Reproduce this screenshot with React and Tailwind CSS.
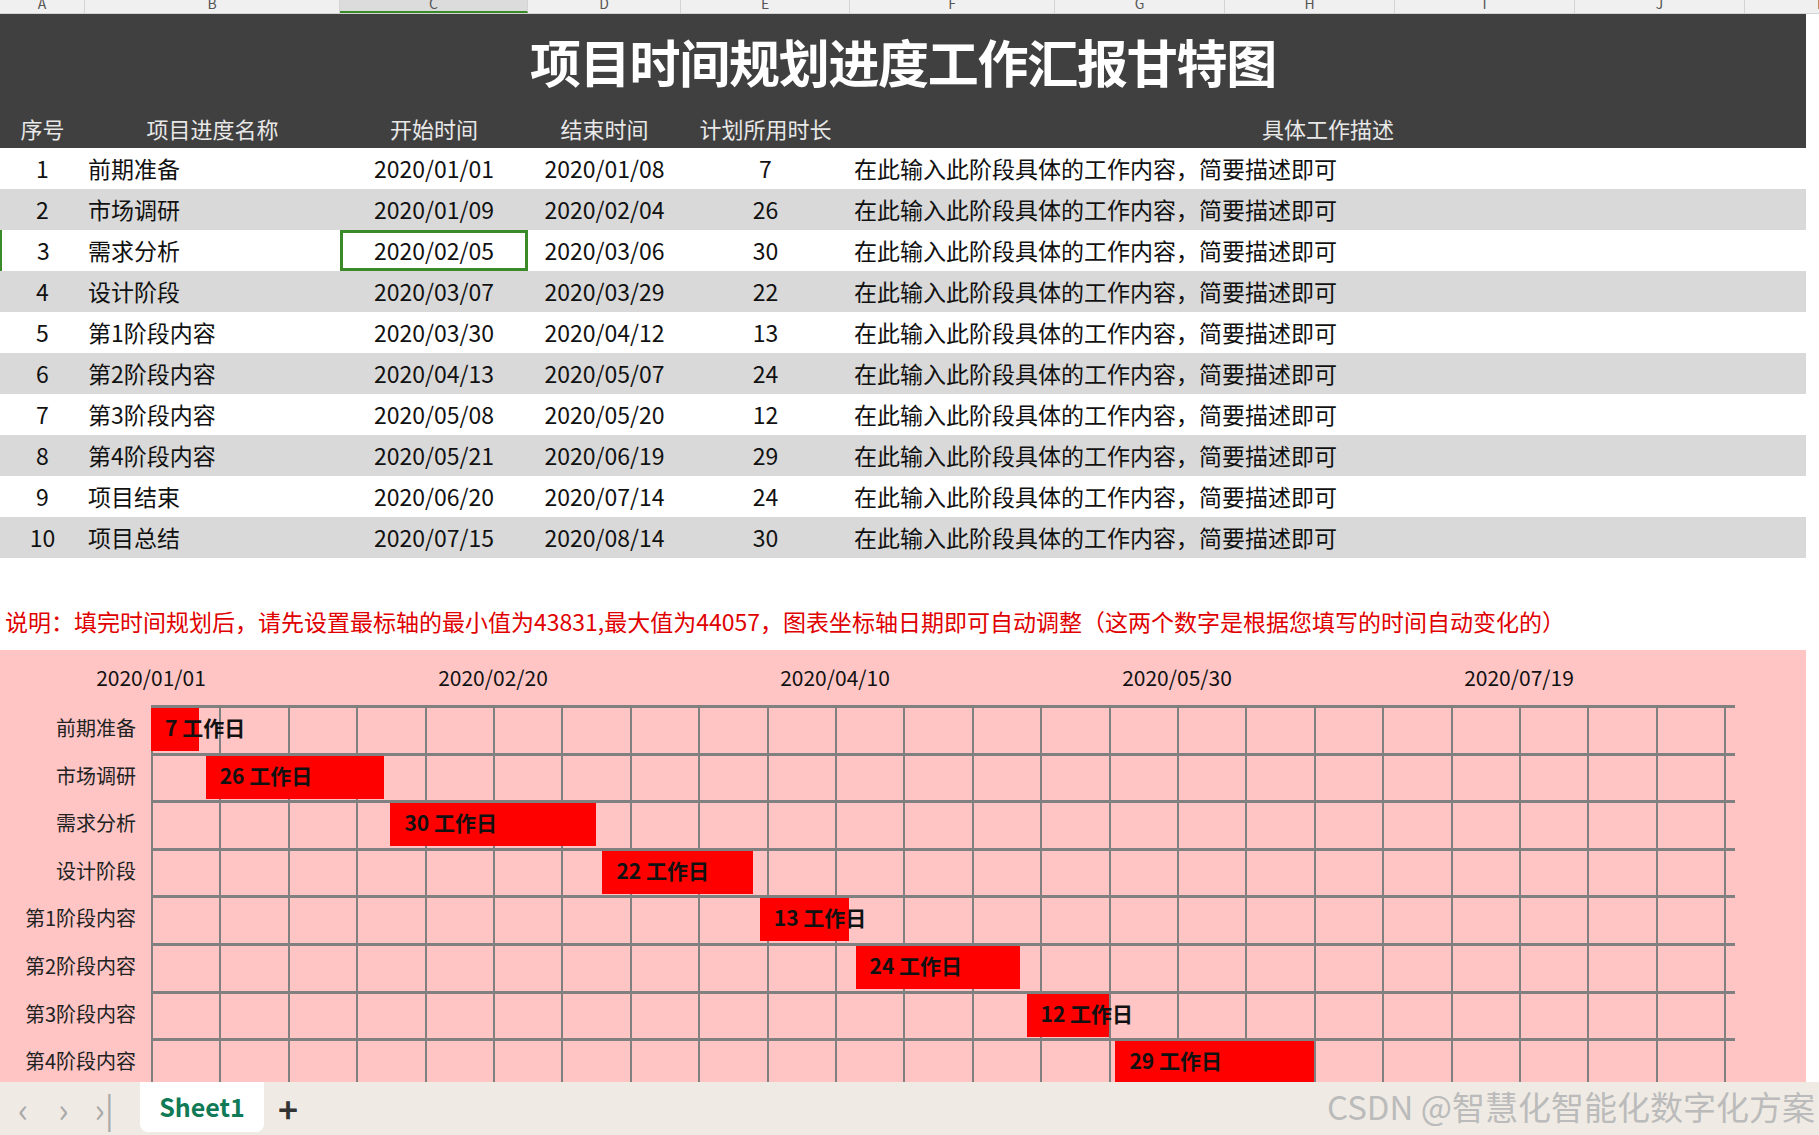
const rows = [
  [1, '前期准备', '2020/01/01', '2020/01/08', 7],
  [2, '市场调研', '2020/01/09', '2020/02/04', 26],
  [3, '需求分析', '2020/02/05', '2020/03/06', 30],
  [4, '设计阶段', '2020/03/07', '2020/03/29', 22],
  [5, '第1阶段内容', '2020/03/30', '2020/04/12', 13],
  [6, '第2阶段内容', '2020/04/13', '2020/05/07', 24],
  [7, '第3阶段内容', '2020/05/08', '2020/05/20', 12],
  [8, '第4阶段内容', '2020/05/21', '2020/06/19', 29],
  [9, '项目结束', '2020/06/20', '2020/07/14', 24],
  [10, '项目总结', '2020/07/15', '2020/08/14', 30],
]
const starts = [0, 8, 35, 66, 89, 103, 128, 141]
const DAY = 6.84
const ROW = 47.6
const cols = [
  ['A', 85], ['B', 255], ['C', 188], ['D', 153], ['E', 169], ['F', 205], ['G', 170], ['H', 170], ['I', 180], ['J', 170], ['K', 154],
]

export default function App() {
  return (
    <div className="w-[1819px] h-[1135px] overflow-hidden bg-white flex flex-col relative" style={{ fontFamily: '"Noto Sans CJK SC", "Noto Sans", sans-serif' }}>
      <div className="h-[14px] flex bg-[#f0f0f0] border-b border-[#d4d4d4] overflow-hidden text-[14px] text-[#555] leading-[6px]">
        {cols.map(([c, w]) => (
          <div key={c} className={`shrink-0 text-center border-r border-[#d4d4d4] ${c === 'C' ? 'bg-[#dcdcdc] border-b-2 border-b-[#3a8a2a]' : ''}`} style={{ width: w }}>{c}</div>
        ))}
      </div>
      <div className="w-[1806px] bg-[#404040] text-white">
        <div className="h-[95px] flex items-center justify-center text-[51px] font-bold tracking-tight">项目时间规划进度工作汇报甘特图</div>
        <div className="h-[39px] flex items-center text-[22px] text-[#e8e8e8]">
          <div className="w-[85px] text-center">序号</div>
          <div className="w-[255px] text-center">项目进度名称</div>
          <div className="w-[188px] text-center">开始时间</div>
          <div className="w-[153px] text-center">结束时间</div>
          <div className="w-[169px] text-center">计划所用时长</div>
          <div className="flex-1 text-center">具体工作描述</div>
        </div>
      </div>
      {rows.map((r, i) => (
        <div key={i} className={`w-[1806px] h-[41px] flex items-center text-[23px] text-[#111] ${i % 2 ? 'bg-[#d9d9d9]' : 'bg-white'} ${i === 2 ? 'border-l-2 border-[#3a8a2a]' : ''}`}>
          <div className={`${i === 2 ? 'w-[83px]' : 'w-[85px]'} text-center`}>{r[0]}</div>
          <div className="w-[255px] pl-[3px]">{r[1]}</div>
          <div className={`w-[188px] h-full flex items-center justify-center ${i === 2 ? 'border-[3px] border-[#3a8a2a]' : ''}`}>{r[2]}</div>
          <div className="w-[153px] text-center">{r[3]}</div>
          <div className="w-[169px] text-center">{r[4]}</div>
          <div className="flex-1 pl-[4px]">在此输入此阶段具体的工作内容，简要描述即可</div>
        </div>
      ))}
      <div className="h-[92px] flex items-end pb-[12px] pl-[5px] text-[23px] text-[#e00000] whitespace-nowrap">
        说明：填完时间规划后，请先设置最标轴的最小值为43831,最大值为44057，图表坐标轴日期即可自动调整（这两个数字是根据您填写的时间自动变化的）
      </div>
      <div className="w-[1806px] flex-1 bg-[#ffc5c5] relative overflow-hidden">
        {[0, 50, 100, 150, 200].map((d, k) => (
          <div key={d} className="absolute top-[12px] w-[160px] -ml-[80px] text-center text-[21px] text-[#111]" style={{ left: 151 + d * DAY }}>
            {['2020/01/01', '2020/02/20', '2020/04/10', '2020/05/30', '2020/07/19'][k]}
          </div>
        ))}
        {Array.from({ length: 10 }).map((_, k) => (
          <div key={k} className="absolute left-[151px] w-[1584px] h-[3px] bg-[#808080]" style={{ top: 55 + k * ROW }} />
        ))}
        {Array.from({ length: 24 }).map((_, k) => (
          <div key={k} className="absolute top-[55px] bottom-0 w-[2px] bg-[#808080]" style={{ left: 151 + k * 68.4 }} />
        ))}
        {rows.slice(0, 8).map((r, k) => (
          <div key={k}>
            <div className="absolute w-[134px] text-right text-[20px] text-[#222]" style={{ left: 2, top: 55 + k * ROW + 8 }}>{r[1]}</div>
            <div className="absolute h-[43px] bg-[#ff0000]" style={{ left: 151 + starts[k] * DAY, width: r[4] * DAY, top: 55 + k * ROW + 3 }} />
            <div className="absolute whitespace-nowrap text-[21px] font-bold text-[#111]" style={{ left: 151 + starts[k] * DAY + 14, top: 55 + k * ROW + 7 }}>{r[4]} 工作日</div>
          </div>
        ))}
      </div>
      <div className="h-[53px] bg-[#efebe4] flex items-center text-[#aaa] text-[34px] relative">
        <span className="ml-[18px]">‹</span>
        <span className="ml-[30px]">›</span>
        <span className="ml-[26px]">›|</span>
        <div className="ml-[26px] self-start h-[50px] w-[124px] bg-white rounded-b-lg flex items-center justify-center text-[#0f7a55] font-bold text-[25px]">Sheet1</div>
        <span className="ml-[14px] text-[#333] text-[34px] font-bold">+</span>
        <div className="absolute right-[4px] top-[0px] text-[33px] text-[#bbbbbb]">CSDN @智慧化智能化数字化方案</div>
      </div>
    </div>
  )
}
